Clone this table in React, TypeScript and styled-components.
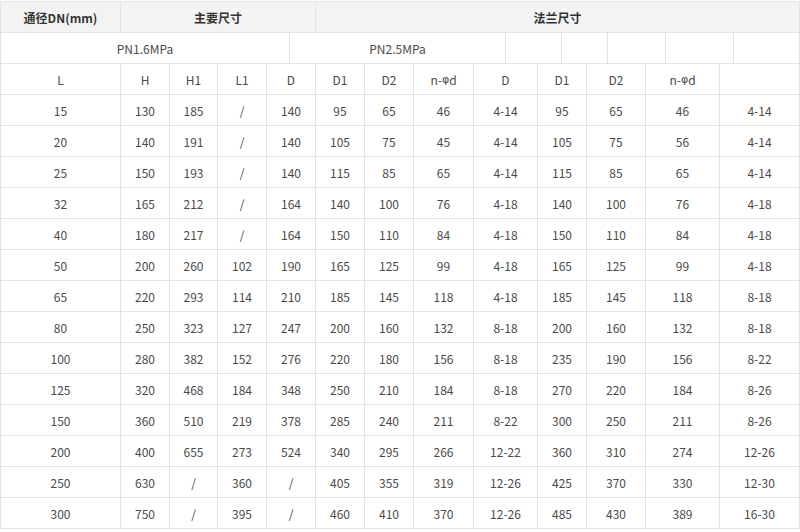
import React from "react";
import styled, { createGlobalStyle } from "styled-components";

const Global = createGlobalStyle`
  html, body { margin: 0; padding: 0; background: #fff; }
  body { font-family: "Noto Sans CJK SC", "Noto Sans", sans-serif; }
`;

const Table = styled.div`
  width: 800px;
  box-sizing: border-box;
  margin-top: 1px;
  border-left: 1px solid #e3e3e3;
  border-top: 1px solid #e3e3e3;
  display: flex;
  flex-direction: column;
`;

const Row = styled.div<{ $cols: string; $head?: boolean }>`
  display: grid;
  grid-template-columns: ${(p) => p.$cols};
  height: 31px;
  background: ${(p) => (p.$head ? "#f3f3f3" : "#fff")};
`;

const Cell = styled.div<{ $head?: boolean }>`
  box-sizing: border-box;
  border-right: 1px solid #e3e3e3;
  border-bottom: 1px solid #e3e3e3;
  display: flex;
  align-items: center;
  justify-content: center;
  font-size: 12px;
  font-weight: ${(p) => (p.$head ? 700 : 400)};
  color: ${(p) => (p.$head ? "#333" : "#4a4a4a")};
  white-space: nowrap;
  overflow: hidden;
`;

const Greek = styled.span`
  font-family: "DejaVu Sans", sans-serif;
  font-size: 11px;
`;

const headCols = "120px 195px 484px";
const subCols = "289px 216px 56px 46px 58px 68px 66px";
const dataCols =
  "120px 49px 48px 49px 49px 49px 49px 60px 64px 49px 59px 74px 80px";

const phiLabel = (
  <>
    n-<Greek>φ</Greek>d
  </>
);

const labels: React.ReactNode[] = ["L", "H", "H1", "L1", "D", "D1", "D2", phiLabel, "D", "D1", "D2", phiLabel, ""];

const rows: string[][] = [
  ["15", "130", "185", "/", "140", "95", "65", "46", "4-14", "95", "65", "46", "4-14"],
  ["20", "140", "191", "/", "140", "105", "75", "45", "4-14", "105", "75", "56", "4-14"],
  ["25", "150", "193", "/", "140", "115", "85", "65", "4-14", "115", "85", "65", "4-14"],
  ["32", "165", "212", "/", "164", "140", "100", "76", "4-18", "140", "100", "76", "4-18"],
  ["40", "180", "217", "/", "164", "150", "110", "84", "4-18", "150", "110", "84", "4-18"],
  ["50", "200", "260", "102", "190", "165", "125", "99", "4-18", "165", "125", "99", "4-18"],
  ["65", "220", "293", "114", "210", "185", "145", "118", "4-18", "185", "145", "118", "8-18"],
  ["80", "250", "323", "127", "247", "200", "160", "132", "8-18", "200", "160", "132", "8-18"],
  ["100", "280", "382", "152", "276", "220", "180", "156", "8-18", "235", "190", "156", "8-22"],
  ["125", "320", "468", "184", "348", "250", "210", "184", "8-18", "270", "220", "184", "8-26"],
  ["150", "360", "510", "219", "378", "285", "240", "211", "8-22", "300", "250", "211", "8-26"],
  ["200", "400", "655", "273", "524", "340", "295", "266", "12-22", "360", "310", "274", "12-26"],
  ["250", "630", "/", "360", "/", "405", "355", "319", "12-26", "425", "370", "330", "12-30"],
  ["300", "750", "/", "395", "/", "460", "410", "370", "12-26", "485", "430", "389", "16-30"],
];

export default function App() {
  return (
    <>
      <Global />
      <Table>
        <Row $cols={headCols} $head>
          <Cell $head>通径DN(mm)</Cell>
          <Cell $head>主要尺寸</Cell>
          <Cell $head>法兰尺寸</Cell>
        </Row>
        <Row $cols={subCols}>
          <Cell>PN1.6MPa</Cell>
          <Cell>PN2.5MPa</Cell>
          <Cell />
          <Cell />
          <Cell />
          <Cell />
          <Cell />
        </Row>
        <Row $cols={dataCols}>
          {labels.map((l, i) => (
            <Cell key={i}>{l}</Cell>
          ))}
        </Row>
        {rows.map((r, ri) => (
          <Row key={ri} $cols={dataCols}>
            {r.map((v, ci) => (
              <Cell key={ci}>{v}</Cell>
            ))}
          </Row>
        ))}
      </Table>
    </>
  );
}
